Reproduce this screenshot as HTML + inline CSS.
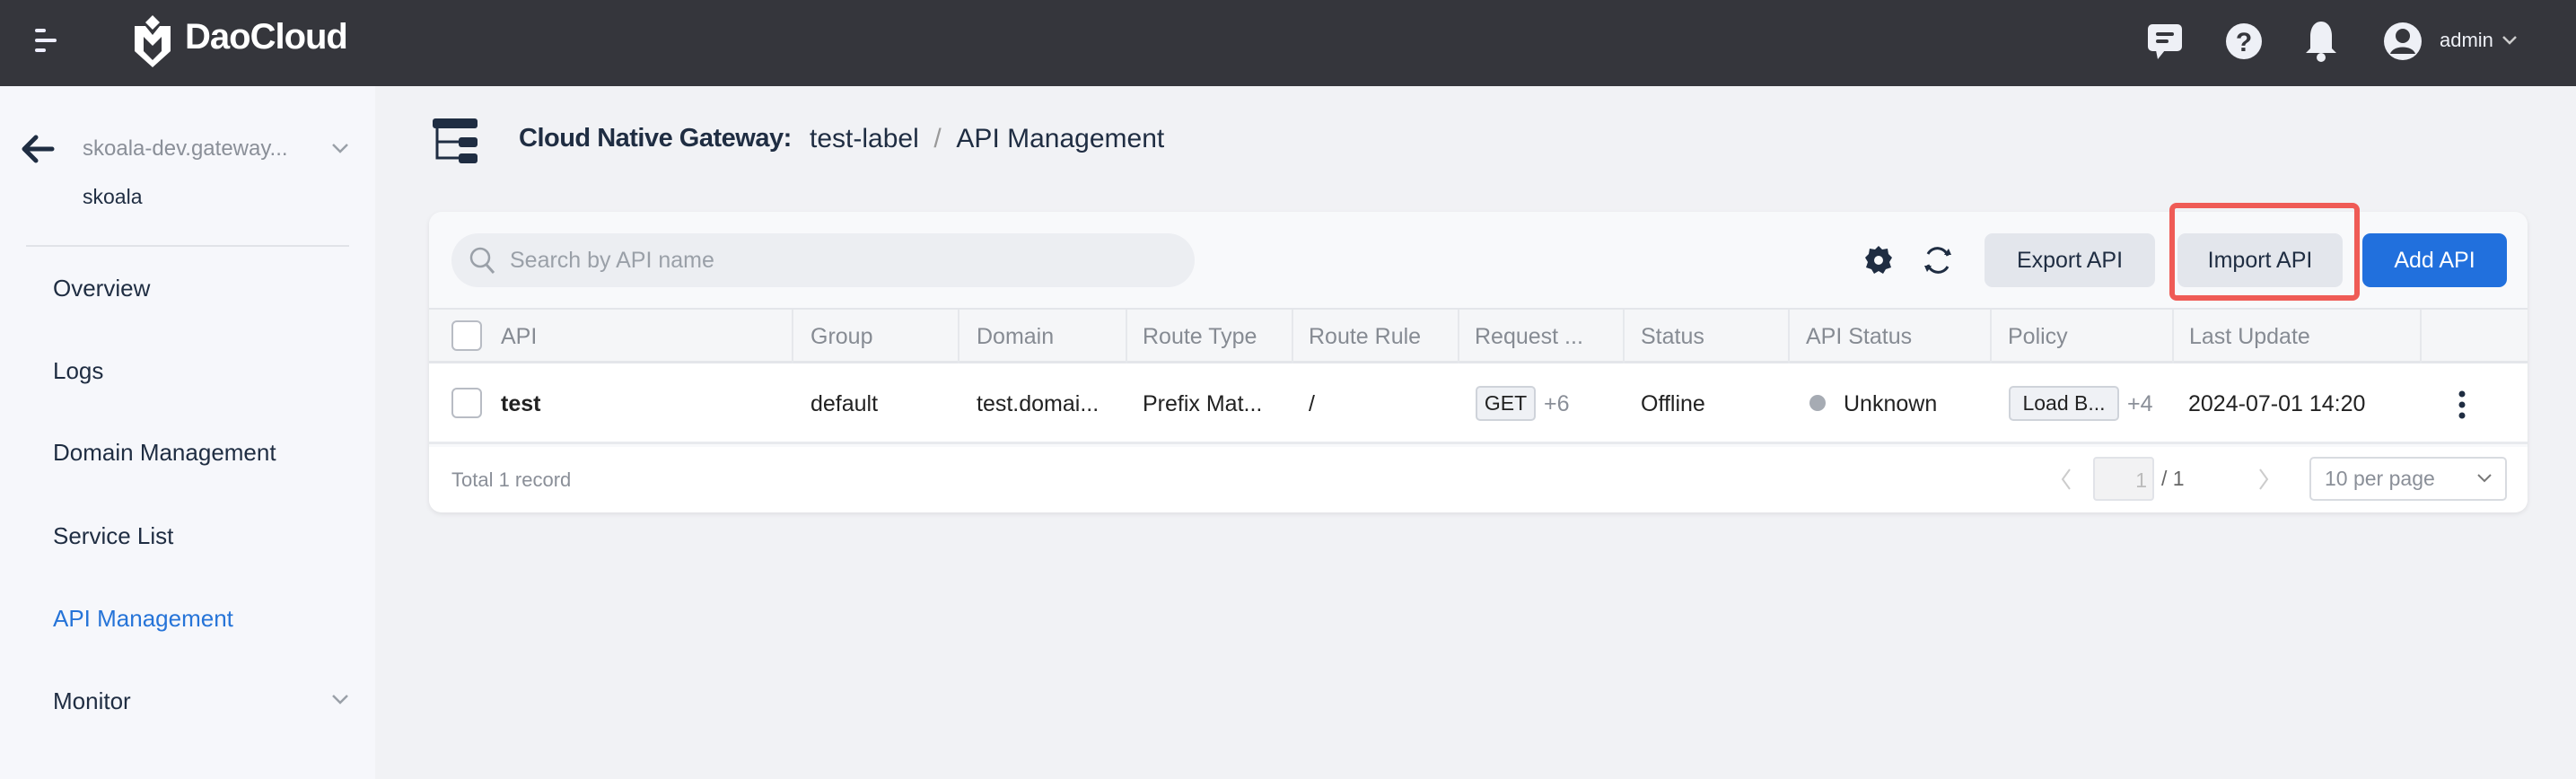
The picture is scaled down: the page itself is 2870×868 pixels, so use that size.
<!DOCTYPE html>
<html><head><meta charset="utf-8"><style>
*{box-sizing:border-box;margin:0;padding:0}
body{width:2870px;height:868px;overflow:hidden;background:#f1f2f5;font-family:"Liberation Sans",sans-serif;position:relative;color:#1f2a3a}
.a{position:absolute;white-space:nowrap}
.hdr{left:0;top:0;width:2870px;height:96px;background:#35363c}
.side{left:0;top:96px;width:418px;height:772px;background:#f6f7fb}
.mi{left:59px;font-size:26px;color:#1f2d42}
.card{left:478px;top:236px;width:2338px;height:335px;background:#f8f9fb;border-radius:14px;box-shadow:0 2px 6px rgba(0,0,0,.08);overflow:hidden}
.th{font-size:25px;color:#868b93}
.td{font-size:25px;color:#222}
.vl{position:absolute;top:345px;width:2px;height:60px;background:#e6e8ec}
.btn{top:260px;height:60px;border-radius:9px;font-size:25px;display:flex;align-items:center;justify-content:center}
.cb{width:34px;height:34px;border:2px solid #b8bcc4;border-radius:6px;background:#fff}
.tag{border:2px solid #cfd3da;background:#eff1f5;border-radius:5px;font-size:23px;display:flex;align-items:center;justify-content:center;color:#222}
</style></head><body>
<div class="a hdr"></div>
<svg class="a" style="left:37px;top:30px" width="38" height="32"><rect x="2" y="2" width="12" height="4" rx="2" fill="#eef"/><rect x="2" y="13" width="24" height="4" rx="2" fill="#eef"/><rect x="2" y="24" width="12" height="4" rx="2" fill="#eef"/></svg>
<svg class="a" style="left:144px;top:15px" width="52" height="62" viewBox="0 0 52 62"><path d="M26 2 L34 10 L26 18 L18 10Z" fill="#fff"/><path d="M6 14 L18 14 L26 24 L34 14 L46 14 L46 42 L26 60 L6 42Z" fill="#fff"/><path d="M16 26 L26 36 L36 26 L36 42 L26 52 L16 42Z" fill="#35363c"/></svg>
<div class="a" style="left:206px;top:19px;font-size:40px;font-weight:bold;color:#fff;letter-spacing:-1px">DaoCloud</div>
<svg class="a" style="left:2392px;top:24px" width="42" height="44" viewBox="0 0 42 44"><rect x="1" y="3" width="38" height="30" rx="5" fill="#eef0f6"/><path d="M10 32 L12 42 L20 32Z" fill="#eef0f6"/><rect x="10" y="12" width="20" height="4" rx="2" fill="#35363c"/><rect x="10" y="20" width="14" height="4" rx="2" fill="#35363c"/></svg>
<svg class="a" style="left:2478px;top:24px" width="44" height="44"><circle cx="22" cy="22" r="20" fill="#eef0f6"/><text x="22" y="33" text-anchor="middle" font-family="Liberation Sans" font-weight="bold" font-size="30" fill="#35363c">?</text></svg>
<svg class="a" style="left:2566px;top:22px" width="40" height="48" viewBox="0 0 40 48"><path d="M20 2 C28 2 32 10 32 18 L32 32 L37 37 L3 37 L8 32 L8 18 C8 10 12 2 20 2Z" fill="#eef0f6"/><circle cx="20" cy="42" r="5" fill="#eef0f6"/></svg>
<svg class="a" style="left:2654px;top:22px" width="46" height="48"><circle cx="23" cy="24" r="21" fill="#eef0f6"/><circle cx="23" cy="18" r="8" fill="#35363c"/><path d="M9 38 C12 28 34 28 37 38 Z" fill="#35363c"/></svg>
<div class="a" style="left:2718px;top:32px;font-size:22px;color:#eef0f6">admin</div>
<svg class="a" style="left:2786px;top:38px" width="20" height="14"><path d="M3 3 L10 10 L17 3" stroke="#ccc" stroke-width="2.5" fill="none"/></svg>

<div class="a side"></div>
<svg class="a" style="left:22px;top:148px" width="40" height="36"><path d="M36 18 H8 M18 5 L5 18 L18 31" stroke="#1f2d42" stroke-width="5" fill="none" stroke-linecap="round" stroke-linejoin="round"/></svg>
<div class="a" style="left:92px;top:152px;font-size:24px;color:#8a8f98">skoala-dev.gateway...</div>
<svg class="a" style="left:368px;top:158px" width="22" height="16"><path d="M3 3 L11 11 L19 3" stroke="#9aa0a8" stroke-width="2.5" fill="none"/></svg>
<div class="a" style="left:92px;top:206px;font-size:23px;color:#1f2d42">skoala</div>
<div class="a" style="left:29px;top:273px;width:360px;height:2px;background:#e1e3e8"></div>
<div class="a mi" style="top:306px">Overview</div>
<div class="a mi" style="top:398px">Logs</div>
<div class="a mi" style="top:489px">Domain Management</div>
<div class="a mi" style="top:582px">Service List</div>
<div class="a mi" style="top:674px;color:#2674d8">API Management</div>
<div class="a mi" style="top:766px">Monitor</div>
<svg class="a" style="left:368px;top:772px" width="22" height="16"><path d="M3 3 L11 11 L19 3" stroke="#9aa0a8" stroke-width="2.5" fill="none"/></svg>

<svg class="a" style="left:480px;top:130px" width="56" height="54" viewBox="0 0 56 54"><rect x="2" y="2" width="50" height="11" rx="3" fill="#1f2d42"/><rect x="31" y="23" width="21" height="11" rx="3" fill="#1f2d42"/><rect x="31" y="41" width="21" height="11" rx="3" fill="#1f2d42"/><path d="M7 10 V46 H32 M7 28 H32" stroke="#1f2d42" stroke-width="3" fill="none"/></svg>
<div class="a" style="left:578px;top:138px;font-size:29px;font-weight:bold;color:#1f2d42;letter-spacing:-0.5px">Cloud Native Gateway:</div>
<div class="a" style="left:902px;top:138px;font-size:30px;color:#1f2d42">test-label&nbsp;&nbsp;<span style="color:#999">/</span>&nbsp;&nbsp;API Management</div>

<div class="a card"></div>
<div class="a" style="left:503px;top:260px;width:828px;height:60px;border-radius:30px;background:#eceef2"></div>
<svg class="a" style="left:522px;top:274px" width="32" height="34"><circle cx="13" cy="13" r="10" stroke="#9aa0a8" stroke-width="2.5" fill="none"/><path d="M20 21 L28 30" stroke="#9aa0a8" stroke-width="3"/></svg>
<div class="a" style="left:568px;top:276px;font-size:25px;color:#9aa0a8">Search by API name</div>
<svg class="a" style="left:2076px;top:272px" width="34" height="36" viewBox="0 0 34 36"><path d="M17 2 L21 6 L27 5 L28 11 L32 15 L29 20 L31 26 L25 28 L22 33 L17 30 L12 33 L9 28 L3 26 L5 20 L2 15 L6 11 L7 5 L13 6Z" fill="#1f2d42"/><circle cx="17" cy="18" r="5" fill="#f8f9fb"/></svg>
<svg class="a" style="left:2140px;top:270px" width="38" height="40" viewBox="0 0 38 40"><path d="M8 13 A12 12 0 0 1 30 15 M30 27 A12 12 0 0 1 8 25" stroke="#1f2d42" stroke-width="3" fill="none"/><path d="M26 14 L34 14 L31 7Z M12 26 L4 26 L7 33Z" fill="#1f2d42"/></svg>
<div class="a btn" style="left:2211px;width:190px;background:#e3e6ec;color:#1f2d42">Export API</div>
<div class="a btn" style="left:2426px;width:184px;background:#e3e6ec;color:#1f2d42">Import API</div>
<div class="a" style="left:2417px;top:226px;width:212px;height:109px;border:6px solid #ef5b56;border-radius:8px"></div>
<div class="a btn" style="left:2632px;width:161px;background:#2170dd;color:#fff">Add API</div>

<div class="a" style="left:478px;top:343px;width:2338px;height:62px;background:#f5f6f8;border-top:2px solid #e4e6ea;border-bottom:3px solid #e4e6ea"></div>
<div class="vl" style="left:882px"></div><div class="vl" style="left:1067px"></div><div class="vl" style="left:1254px"></div><div class="vl" style="left:1439px"></div><div class="vl" style="left:1624px"></div><div class="vl" style="left:1808px"></div><div class="vl" style="left:1992px"></div><div class="vl" style="left:2217px"></div><div class="vl" style="left:2420px"></div><div class="vl" style="left:2696px"></div>
<div class="a cb" style="left:503px;top:357px"></div>
<div class="a th" style="left:558px;top:361px">API</div>
<div class="a th" style="left:903px;top:361px">Group</div>
<div class="a th" style="left:1088px;top:361px">Domain</div>
<div class="a th" style="left:1273px;top:361px">Route Type</div>
<div class="a th" style="left:1458px;top:361px">Route Rule</div>
<div class="a th" style="left:1643px;top:361px">Request ...</div>
<div class="a th" style="left:1828px;top:361px">Status</div>
<div class="a th" style="left:2012px;top:361px">API Status</div>
<div class="a th" style="left:2237px;top:361px">Policy</div>
<div class="a th" style="left:2439px;top:361px">Last Update</div>

<div class="a" style="left:478px;top:405px;width:2338px;height:90px;background:#fff;border-bottom:3px solid #e8eaee"></div>
<div class="a cb" style="left:503px;top:432px"></div>
<div class="a td" style="left:558px;top:436px;font-weight:bold">test</div>
<div class="a td" style="left:903px;top:436px">default</div>
<div class="a td" style="left:1088px;top:436px">test.domai...</div>
<div class="a td" style="left:1273px;top:436px">Prefix Mat...</div>
<div class="a td" style="left:1458px;top:436px">/</div>
<div class="a tag" style="left:1644px;top:430px;width:67px;height:39px">GET</div>
<div class="a td" style="left:1720px;top:436px;color:#8a8f98">+6</div>
<div class="a td" style="left:1828px;top:436px">Offline</div>
<div class="a" style="left:2016px;top:440px;width:18px;height:18px;border-radius:50%;background:#a6abb3"></div>
<div class="a td" style="left:2054px;top:436px">Unknown</div>
<div class="a tag" style="left:2238px;top:430px;width:123px;height:39px">Load B...</div>
<div class="a td" style="left:2370px;top:436px;color:#8a8f98">+4</div>
<div class="a td" style="left:2438px;top:436px">2024-07-01 14:20</div>
<svg class="a" style="left:2736px;top:434px" width="14" height="34"><circle cx="7" cy="5" r="3.5" fill="#1f2d42"/><circle cx="7" cy="17" r="3.5" fill="#1f2d42"/><circle cx="7" cy="29" r="3.5" fill="#1f2d42"/></svg>

<div class="a" style="left:478px;top:498px;width:2338px;height:73px;background:#fff;border-radius:0 0 14px 14px"></div>
<div class="a" style="left:503px;top:522px;font-size:22px;color:#8a8f98">Total 1 record</div>
<svg class="a" style="left:2294px;top:520px" width="16" height="28"><path d="M12 3 L4 14 L12 25" stroke="#ccc" stroke-width="2" fill="none"/></svg>
<div class="a" style="left:2332px;top:509px;width:68px;height:49px;border:2px solid #e1e3e8;background:#f2f2f3;border-radius:4px;font-size:23px;color:#bbb;text-align:right;padding:11px 6px 0 0">1</div>
<div class="a" style="left:2408px;top:520px;font-size:23px;color:#666">/ 1</div>
<svg class="a" style="left:2514px;top:520px" width="16" height="28"><path d="M4 3 L12 14 L4 25" stroke="#ccc" stroke-width="2" fill="none"/></svg>
<div class="a" style="left:2573px;top:509px;width:220px;height:49px;border:2px solid #d8dbe0;border-radius:5px;background:#fff"></div>
<div class="a" style="left:2590px;top:520px;font-size:23px;color:#8a8f98">10 per page</div>
<svg class="a" style="left:2758px;top:526px" width="20" height="14"><path d="M3 3 L10 10 L17 3" stroke="#777" stroke-width="2" fill="none"/></svg>
</body></html>
